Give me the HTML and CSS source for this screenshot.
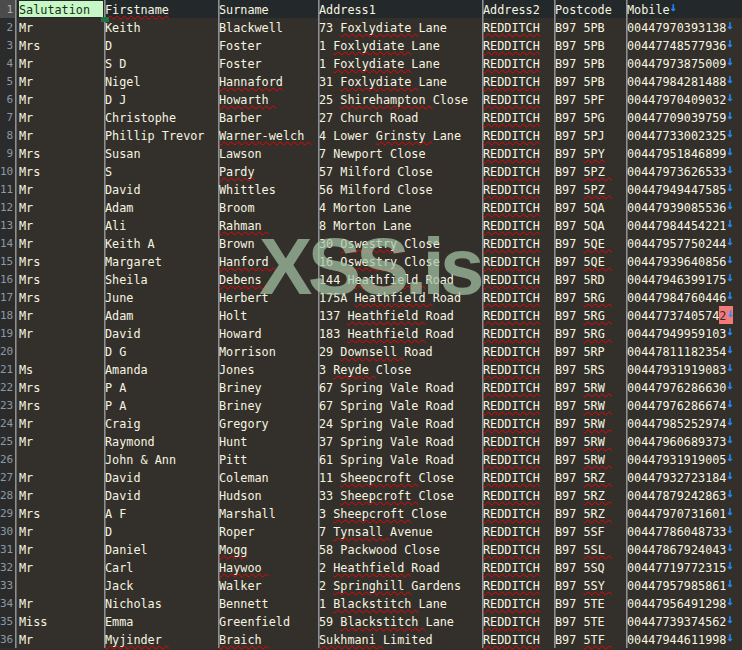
FILE: index.html
```html
<!DOCTYPE html>
<html lang="en">
<head>
<meta charset="utf-8">
<title>Sheet</title>
<link rel="stylesheet" href="styles.css">
</head>
<body>
<main class="sheet">
<table class="grid">
<colgroup><col class="c0"><col class="c1"><col class="c2"><col class="c3"><col class="c4"><col class="c5"><col class="c6"><col class="c7"></colgroup>
<tbody>
<tr class="head"><th>1</th><td class="sal"><span class="active">Salutation<i class="handle"></i></span></td><td><u>Firstname</u></td><td>Surname</td><td>Address1</td><td>Address2</td><td>Postcode</td><td>Mobile<b>↓</b></td></tr>
<tr><th>2</th><td class="sal">Mr</td><td>Keith</td><td>Blackwell</td><td>73 <u>Foxlydiate </u>Lane</td><td><u>REDDITCH</u></td><td>B97 5PB</td><td>00447970393138<b>↓</b></td></tr>
<tr><th>3</th><td class="sal">Mrs</td><td>D</td><td>Foster</td><td>1 <u>Foxlydiate </u>Lane</td><td><u>REDDITCH</u></td><td>B97 5PB</td><td>00447748577936<b>↓</b></td></tr>
<tr><th>4</th><td class="sal">Mr</td><td>S D</td><td>Foster</td><td>1 <u>Foxlydiate </u>Lane</td><td><u>REDDITCH</u></td><td>B97 5PB</td><td>00447973875009<b>↓</b></td></tr>
<tr><th>5</th><td class="sal">Mr</td><td>Nigel</td><td><u>Hannaford</u></td><td>31 <u>Foxlydiate </u>Lane</td><td><u>REDDITCH</u></td><td>B97 5PB</td><td>00447984281488<b>↓</b></td></tr>
<tr><th>6</th><td class="sal">Mr</td><td>D J</td><td><u>Howarth </u></td><td>25 <u>Shirehampton </u>Close</td><td><u>REDDITCH</u></td><td>B97 5PF</td><td>00447970409032<b>↓</b></td></tr>
<tr><th>7</th><td class="sal">Mr</td><td>Christophe</td><td>Barber</td><td>27 Church Road</td><td><u>REDDITCH</u></td><td>B97 5PG</td><td>00447709039759<b>↓</b></td></tr>
<tr><th>8</th><td class="sal">Mr</td><td>Phillip Trevor</td><td><u>Warner-welch </u></td><td>4 Lower <u>Grinsty </u>Lane</td><td><u>REDDITCH</u></td><td>B97 5PJ</td><td>00447733002325<b>↓</b></td></tr>
<tr><th>9</th><td class="sal">Mrs</td><td>Susan</td><td>Lawson</td><td>7 Newport Close</td><td><u>REDDITCH</u></td><td>B97 <u>5PY</u></td><td>00447951846899<b>↓</b></td></tr>
<tr><th>10</th><td class="sal">Mrs</td><td>S</td><td><u>Pardy</u></td><td>57 Milford Close</td><td><u>REDDITCH</u></td><td>B97 <u>5PZ </u></td><td>00447973626533<b>↓</b></td></tr>
<tr><th>11</th><td class="sal">Mr</td><td>David</td><td>Whittles</td><td>56 Milford Close</td><td><u>REDDITCH</u></td><td>B97 <u>5PZ </u></td><td>00447949447585<b>↓</b></td></tr>
<tr><th>12</th><td class="sal">Mr</td><td>Adam</td><td>Broom</td><td>4 Morton Lane</td><td><u>REDDITCH</u></td><td>B97 5QA</td><td>00447939085536<b>↓</b></td></tr>
<tr><th>13</th><td class="sal">Mr</td><td>Ali</td><td><u>Rahman </u></td><td>8 Morton Lane</td><td><u>REDDITCH</u></td><td>B97 5QA</td><td>00447984454221<b>↓</b></td></tr>
<tr><th>14</th><td class="sal">Mr</td><td>Keith A</td><td>Brown</td><td>30 <u>Oswestry </u>Close</td><td><u>REDDITCH</u></td><td>B97 <u>5QE </u></td><td>00447957750244<b>↓</b></td></tr>
<tr><th>15</th><td class="sal">Mrs</td><td>Margaret</td><td><u>Hanford </u></td><td>16 <u>Oswestry </u>Close</td><td><u>REDDITCH</u></td><td>B97 <u>5QE </u></td><td>00447939640856<b>↓</b></td></tr>
<tr><th>16</th><td class="sal">Mrs</td><td>Sheila</td><td><u>Debens </u></td><td>144 <u>Heathfield </u>Road</td><td><u>REDDITCH</u></td><td>B97 5RD</td><td>00447946399175<b>↓</b></td></tr>
<tr><th>17</th><td class="sal">Mrs</td><td>June</td><td>Herbert</td><td>175A <u>Heathfield </u>Road</td><td><u>REDDITCH</u></td><td>B97 <u>5RG </u></td><td>00447984760446<b>↓</b></td></tr>
<tr><th>18</th><td class="sal">Mr</td><td>Adam</td><td>Holt</td><td>137 <u>Heathfield </u>Road</td><td><u>REDDITCH</u></td><td>B97 <u>5RG </u></td><td>0044773740574<span class="hit">2<b>↓</b></span></td></tr>
<tr><th>19</th><td class="sal">Mr</td><td>David</td><td>Howard</td><td>183 <u>Heathfield </u>Road</td><td><u>REDDITCH</u></td><td>B97 <u>5RG </u></td><td>00447949959103<b>↓</b></td></tr>
<tr><th>20</th><td class="sal"></td><td>D G</td><td>Morrison</td><td>29 <u>Downsell </u>Road</td><td><u>REDDITCH</u></td><td>B97 5RP</td><td>00447811182354<b>↓</b></td></tr>
<tr><th>21</th><td class="sal">Ms</td><td>Amanda</td><td>Jones</td><td>3 <u>Reyde </u>Close</td><td><u>REDDITCH</u></td><td>B97 5RS</td><td>00447931919083<b>↓</b></td></tr>
<tr><th>22</th><td class="sal">Mrs</td><td>P A</td><td>Briney</td><td>67 Spring Vale Road</td><td><u>REDDITCH</u></td><td>B97 <u>5RW </u></td><td>00447976286630<b>↓</b></td></tr>
<tr><th>23</th><td class="sal">Mrs</td><td>P A</td><td>Briney</td><td>67 Spring Vale Road</td><td><u>REDDITCH</u></td><td>B97 <u>5RW </u></td><td>00447976286674<b>↓</b></td></tr>
<tr><th>24</th><td class="sal">Mr</td><td>Craig</td><td>Gregory</td><td>24 Spring Vale Road</td><td><u>REDDITCH</u></td><td>B97 <u>5RW </u></td><td>00447985252974<b>↓</b></td></tr>
<tr><th>25</th><td class="sal">Mr</td><td>Raymond</td><td>Hunt</td><td>37 Spring Vale Road</td><td><u>REDDITCH</u></td><td>B97 <u>5RW </u></td><td>00447960689373<b>↓</b></td></tr>
<tr><th>26</th><td class="sal"></td><td>John &amp; Ann</td><td>Pitt</td><td>61 Spring Vale Road</td><td><u>REDDITCH</u></td><td>B97 <u>5RW </u></td><td>00447931919005<b>↓</b></td></tr>
<tr><th>27</th><td class="sal">Mr</td><td>David</td><td>Coleman</td><td>11 <u>Sheepcroft </u>Close</td><td><u>REDDITCH</u></td><td>B97 <u>5RZ </u></td><td>00447932723184<b>↓</b></td></tr>
<tr><th>28</th><td class="sal">Mr</td><td>David</td><td>Hudson</td><td>33 <u>Sheepcroft </u>Close</td><td><u>REDDITCH</u></td><td>B97 <u>5RZ </u></td><td>00447879242863<b>↓</b></td></tr>
<tr><th>29</th><td class="sal">Mrs</td><td>A F</td><td>Marshall</td><td>3 <u>Sheepcroft </u>Close</td><td><u>REDDITCH</u></td><td>B97 <u>5RZ </u></td><td>00447970731601<b>↓</b></td></tr>
<tr><th>30</th><td class="sal">Mr</td><td>D</td><td>Roper</td><td>7 <u>Tynsall </u>Avenue</td><td><u>REDDITCH</u></td><td>B97 5SF</td><td>00447786048733<b>↓</b></td></tr>
<tr><th>31</th><td class="sal">Mr</td><td>Daniel</td><td><u>Mogg</u></td><td>58 Packwood Close</td><td><u>REDDITCH</u></td><td>B97 <u>5SL </u></td><td>00447867924043<b>↓</b></td></tr>
<tr><th>32</th><td class="sal">Mr</td><td>Carl</td><td><u>Haywoo </u></td><td>2 <u>Heathfield </u>Road</td><td><u>REDDITCH</u></td><td>B97 5SQ</td><td>00447719772315<b>↓</b></td></tr>
<tr><th>33</th><td class="sal"></td><td>Jack</td><td>Walker</td><td>2 <u>Springhill </u>Gardens</td><td><u>REDDITCH</u></td><td>B97 <u>5SY </u></td><td>00447957985861<b>↓</b></td></tr>
<tr><th>34</th><td class="sal">Mr</td><td>Nicholas</td><td>Bennett</td><td>1 <u>Blackstitch </u>Lane</td><td><u>REDDITCH</u></td><td>B97 5TE</td><td>00447956491298<b>↓</b></td></tr>
<tr><th>35</th><td class="sal">Miss</td><td>Emma</td><td>Greenfield</td><td>59 <u>Blackstitch </u>Lane</td><td><u>REDDITCH</u></td><td>B97 5TE</td><td>00447739374562<b>↓</b></td></tr>
<tr><th>36</th><td class="sal">Mr</td><td><u>Myjinder </u></td><td><u>Braich </u></td><td><u>Sukhmani </u>Limited</td><td><u>REDDITCH</u></td><td>B97 <u>5TF </u></td><td>00447944611998<b>↓</b></td></tr>
</tbody>
</table>
<div class="watermark">XSS.is</div>
</main>
</body>
</html>
```
FILE: styles.css
```css
html, body {
  margin: 0;
  height: 100%;
  background: #33302b;
  overflow: hidden;
}

.sheet {
  position: relative;
  width: 742px;
  height: 650px;
  overflow: hidden;
  font-family: "DejaVu Sans Mono", "Liberation Mono", monospace;
  font-size: 11.8px;
  color: #f7f4e0;
}

.grid {
  table-layout: fixed;
  width: 742px;
  border-collapse: separate;
  border-spacing: 0;
}

.c0 { width: 15px; }
.c1 { width: 89px; }
.c2 { width: 114px; }
.c3 { width: 100px; }
.c4 { width: 164px; }
.c5 { width: 72px; }
.c6 { width: 72px; }
.c7 { width: 116px; }

tr { height: 18px; }

th, td {
  height: 18px;
  padding: 2px 0 0;
  line-height: 16px;
  white-space: pre;
  overflow: visible;
  font-weight: normal;
  text-align: left;
  vertical-align: top;
  box-sizing: border-box;
}

th {
  background: #2b2b2b;
  color: #8d9aa5;
  text-align: right;
  padding-right: 2px;
  font-size: 11px;
  overflow: hidden;
}

td {
  border-left: 1px solid #8f8f8f;
  box-shadow: inset 1px 0 0 #666;
}

td.sal { padding-left: 3px; }

.head th { background: #4b4b4b; color: #a9b0b0; }
.head td { background: #23282a; }

u {
  text-decoration: underline wavy #f00000;
  text-decoration-thickness: 1.2px;
  text-underline-offset: 1px;
  text-decoration-skip-ink: none;
}

b {
  position: relative;
  top: -3px;
  font-weight: normal;
  font-size: 12px;
  line-height: 0;
  color: #1f8fff;
  -webkit-text-stroke: 0.4px #1f8fff;
  margin-right: -1px;
}

.active {
  position: relative;
  display: block;
  height: 16px;
  line-height: 16px;
  margin: -1px 1px 0 0;
  padding-top: 1px;
  box-sizing: border-box;
  background: #c6f7c4;
  color: #163020;
}

.handle {
  position: absolute;
  right: -6px;
  bottom: -5px;
  width: 8px;
  height: 5px;
  background: #217346;
}

.hit {
  background: #f47a7a;
  box-shadow: 0 -2px 0 #f47a7a;
  color: #33302b;
  display: inline-block;
  height: 16px;
  vertical-align: top;
}

.watermark {
  position: absolute;
  left: 259px;
  top: 222px;
  font-family: "Liberation Sans", Arial, sans-serif;
  font-weight: bold;
  font-size: 80px;
  line-height: 90px;
  letter-spacing: -4.7px;
  color: rgba(165, 195, 165, 0.72);
}
```
